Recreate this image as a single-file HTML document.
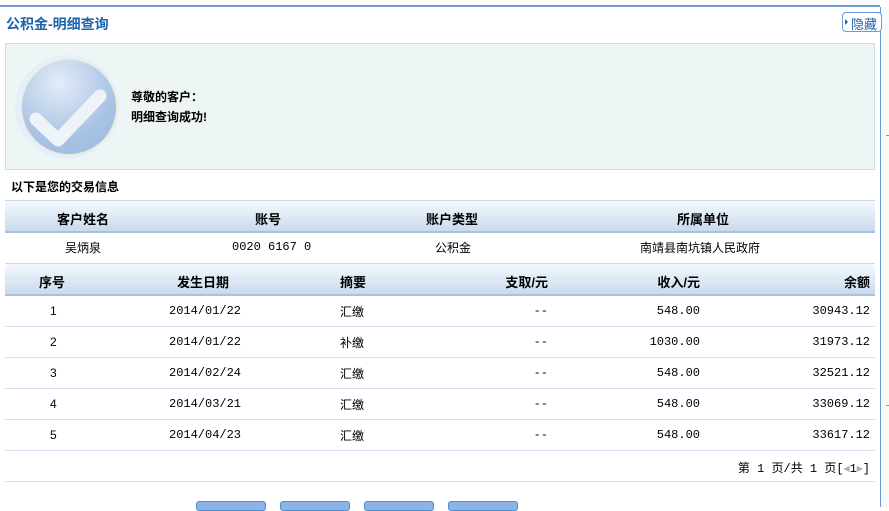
<!DOCTYPE html>
<html><head><meta charset="utf-8"><style>
*{margin:0;padding:0;box-sizing:border-box}
body{width:889px;height:507px;overflow:hidden;background:#fff;font-family:"Liberation Sans","Noto Sans CJK SC",sans-serif;font-size:12px;color:#000;position:relative}
.abs{position:absolute}
.hdr{background:linear-gradient(#f4f8fc,#c9dbee);border-top:1px solid #c8d8ea;border-bottom:2px solid #a9c1dc}
.row{border-bottom:1px solid #d4e2f2}
.c{position:absolute;top:0;white-space:nowrap}
.mono{font-family:"Liberation Mono","Noto Sans CJK SC",monospace}
.btn{position:absolute;top:501px;width:70px;height:10px;background:#8bb4e4;border:1px solid #4e8fd6;border-radius:3px}
</style></head><body>
<div class="abs" style="left:0;top:5px;width:880px;height:2px;background:#6b9bd1"></div>
<div class="abs" style="left:880px;top:7px;width:1px;height:500px;background:#6b9bd1"></div>
<div class="abs" style="left:881px;top:7px;width:8px;height:500px;background:#f8f9fb"></div>
<div class="abs" style="left:886px;top:135px;width:3px;height:1px;background:#6b9bd1"></div>
<div class="abs" style="left:886px;top:405px;width:3px;height:1px;background:#6b9bd1"></div>
<div class="abs" style="left:6px;top:14px;font-size:14px;font-weight:bold;color:#1a64b0">公积金-明细查询</div>
<div class="abs" style="left:842px;top:12px;width:40px;height:20px;border:1px solid #6b9bd1;border-radius:4px;background:#fff;color:#1a64b0;font-size:13px;padding:1px 0 0 8px">隐藏</div>
<div class="abs" style="left:845px;top:19px;width:0;height:0;border-left:3px solid #1a64b0;border-top:3px solid transparent;border-bottom:3px solid transparent"></div>
<div class="abs" style="left:5px;top:43px;width:870px;height:127px;background:#eef6f5;border:1px solid #cadbe6"></div>
<div class="abs" style="left:15px;top:55px;width:104px;height:104px;border-radius:50%;background:#e8eef8"></div>
<div class="abs" style="left:22px;top:60px;width:94px;height:94px;border-radius:50%;background:radial-gradient(circle at 40% 25%,#e4ecf8,#a9c3e4 60%,#9ab7de);box-shadow:0 0 0 1px #e6ecc8"></div>
<svg class="abs" style="left:22px;top:60px" width="94" height="94"><path d="M14 59 L36 80 L78 36" stroke="#eef3fa" stroke-width="13" fill="none" stroke-linecap="round" stroke-linejoin="round"/></svg>
<div class="abs" style="left:131px;top:87px;font-weight:bold;line-height:20px">尊敬的客户：<br>明细查询成功!</div>
<div class="abs" style="left:11px;top:178px;font-weight:bold">以下是您的交易信息</div>
<div class="abs hdr" style="left:5px;top:200px;width:870px;height:33px;font-weight:bold;font-size:13px">
<span class="c" style="left:52px;top:8px">客户姓名</span><span class="c" style="left:250px;top:8px">账号</span><span class="c" style="left:421px;top:8px">账户类型</span><span class="c" style="left:672px;top:8px">所属单位</span></div>
<div class="abs" style="left:5px;top:233px;width:870px;height:30px">
<span class="c" style="left:60px;top:6px">吴炳泉</span><span class="c mono" style="left:227px;top:7px">0020 6167 0</span><span class="c" style="left:430px;top:6px">公积金</span><span class="c" style="left:635px;top:6px">南靖县南坑镇人民政府</span></div>
<div class="abs hdr" style="left:5px;top:263px;width:870px;height:33px;font-weight:bold;font-size:13px">
<span class="c" style="left:34px;top:8px">序号</span><span class="c" style="left:172px;top:8px">发生日期</span><span class="c" style="left:335px;top:8px">摘要</span><span class="c" style="right:327px;top:8px">支取/元</span><span class="c" style="right:175px;top:8px">收入/元</span><span class="c" style="right:5px;top:8px">余额</span></div>
<div class="abs" style="left:5px;top:296px;width:870px">
<div class="row" style="position:relative;height:31px"><span class="c" style="left:45px;top:8px">1</span><span class="c mono" style="left:164px;top:8px">2014/01/22</span><span class="c" style="left:335px;top:7px">汇缴</span><span class="c mono" style="right:327px;top:8px">--</span><span class="c mono" style="right:175px;top:8px">548.00</span><span class="c mono" style="right:5px;top:8px">30943.12</span></div>
<div class="row" style="position:relative;height:31px"><span class="c" style="left:45px;top:8px">2</span><span class="c mono" style="left:164px;top:8px">2014/01/22</span><span class="c" style="left:335px;top:7px">补缴</span><span class="c mono" style="right:327px;top:8px">--</span><span class="c mono" style="right:175px;top:8px">1030.00</span><span class="c mono" style="right:5px;top:8px">31973.12</span></div>
<div class="row" style="position:relative;height:31px"><span class="c" style="left:45px;top:8px">3</span><span class="c mono" style="left:164px;top:8px">2014/02/24</span><span class="c" style="left:335px;top:7px">汇缴</span><span class="c mono" style="right:327px;top:8px">--</span><span class="c mono" style="right:175px;top:8px">548.00</span><span class="c mono" style="right:5px;top:8px">32521.12</span></div>
<div class="row" style="position:relative;height:31px"><span class="c" style="left:45px;top:8px">4</span><span class="c mono" style="left:164px;top:8px">2014/03/21</span><span class="c" style="left:335px;top:7px">汇缴</span><span class="c mono" style="right:327px;top:8px">--</span><span class="c mono" style="right:175px;top:8px">548.00</span><span class="c mono" style="right:5px;top:8px">33069.12</span></div>
<div class="row" style="position:relative;height:31px"><span class="c" style="left:45px;top:8px">5</span><span class="c mono" style="left:164px;top:8px">2014/04/23</span><span class="c" style="left:335px;top:7px">汇缴</span><span class="c mono" style="right:327px;top:8px">--</span><span class="c mono" style="right:175px;top:8px">548.00</span><span class="c mono" style="right:5px;top:8px">33617.12</span></div>
<div class="row" style="position:relative;height:31px"><span class="c mono" style="right:5px;top:8px">第 1 页/共 1 页[<span style="color:#aaa">◂</span>1<span style="color:#aaa">▸</span>]</span></div>
</div>
<div class="btn" style="left:196px"></div><div class="btn" style="left:280px"></div><div class="btn" style="left:364px"></div><div class="btn" style="left:448px"></div>
</body></html>
